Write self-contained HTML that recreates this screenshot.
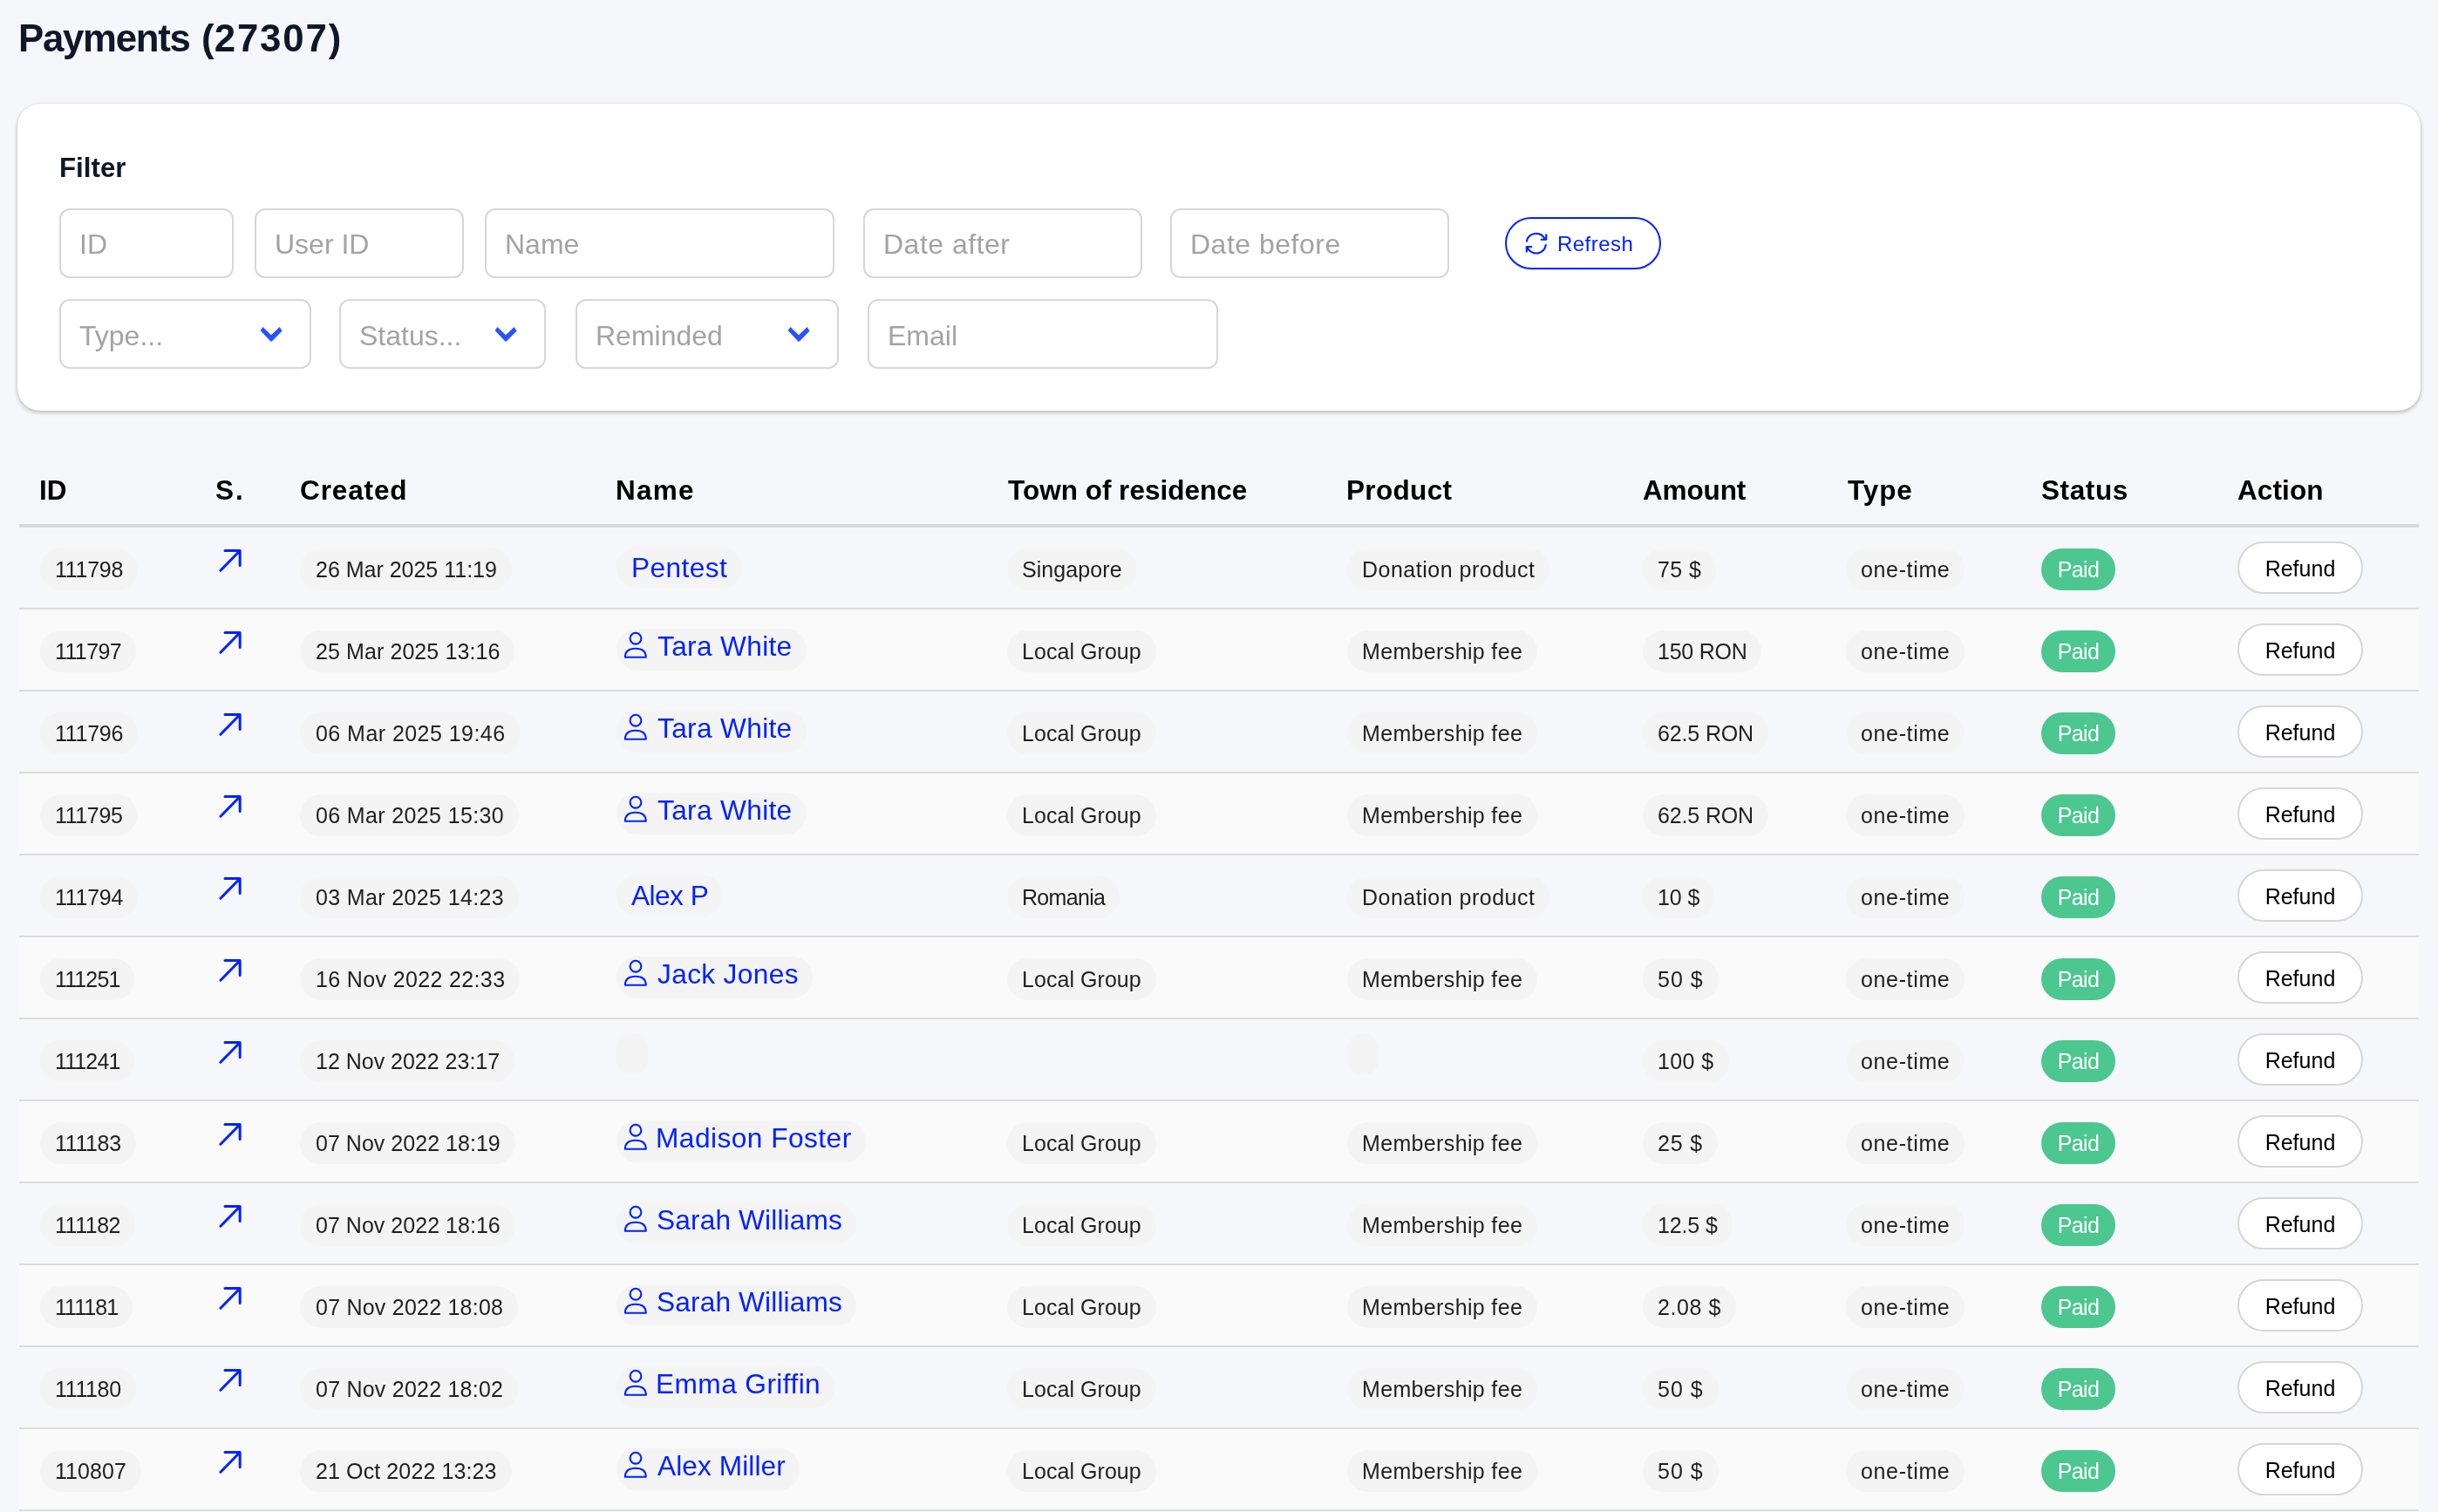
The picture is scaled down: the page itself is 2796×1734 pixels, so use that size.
<!DOCTYPE html><html><head><meta charset="utf-8"><title>Payments</title><style>
*{margin:0;padding:0;box-sizing:border-box}
html,body{width:2796px;height:1734px;overflow:hidden;background:#f6f7fb;font-family:"Liberation Sans",sans-serif}
.a{position:absolute;white-space:nowrap}
.t{position:absolute;white-space:nowrap;line-height:1}
.card{position:absolute;left:20px;top:119px;width:2756px;height:352px;background:#fff;border-radius:26px;box-shadow:0 2px 5px rgba(0,0,0,.26),0 0 2px rgba(0,0,0,.10)}
.in{position:absolute;height:80px;border:2px solid #d7d7d7;border-radius:12px;background:#fff}
.ph{position:absolute;color:#a3a3a3;font-size:32px;line-height:1;white-space:nowrap}
.th{position:absolute;top:547px;font-size:31.5px;font-weight:bold;color:#000;line-height:1;white-space:nowrap}
.row{position:absolute;left:22px;width:2752px;height:94px;border-bottom:2px solid #dcdcdc}
.odd{background:#fafafa}
.pill{position:absolute;height:48px;line-height:48px;background:#f4f4f4;border-radius:24px;padding:0 17px;font-size:25px;color:#1f1f1f;white-space:nowrap}
.name{position:absolute;height:48px;background:#f4f4f4;border-radius:24px;color:#0022ff;font-size:31.7px;white-space:nowrap}
.paid{position:absolute;height:48px;line-height:48px;width:85px;background:#4bc78f;border-radius:24px;color:#fff;font-size:25px;text-align:center;white-space:nowrap}
.ref{position:absolute;height:60px;width:144px;line-height:59px;background:#fff;border:2px solid #d6d6d6;border-radius:30px;color:#000;font-size:25px;text-align:center;white-space:nowrap}
svg{position:absolute;overflow:visible}
#root{position:absolute;left:0;top:0;width:2796px;height:1734px;overflow:hidden;background:#f6f7fb;will-change:transform}
</style></head><body><div id="root">
<div class="t" style="left:21px;top:22px;font-size:43.8px;font-weight:bold;color:#0f172a"><span style="letter-spacing:-1.29px">Payment</span>s (<span style="letter-spacing:1.85px">27307</span>)</div>
<div class="card"></div>
<div class="t" style="left:68px;top:177px;font-size:31.3px;font-weight:bold;color:#0f172a">Filter</div>
<div class="in" style="left:68px;top:239px;width:200px"></div>
<div class="ph" style="left:91px;top:263.8px;">ID</div>
<div class="in" style="left:292px;top:239px;width:240px"></div>
<div class="ph" style="left:315px;top:263.8px;">User ID</div>
<div class="in" style="left:556px;top:239px;width:401px"></div>
<div class="ph" style="left:579px;top:263.8px;">Name</div>
<div class="in" style="left:990px;top:239px;width:320px"></div>
<div class="ph" style="left:1013px;top:263.8px;letter-spacing:0.5px;">Date after</div>
<div class="in" style="left:1342px;top:239px;width:320px"></div>
<div class="ph" style="left:1365px;top:263.8px;letter-spacing:0.5px;">Date before</div>
<div class="a" style="left:1726px;top:249px;width:179px;height:60px;border:2.5px solid #0022ff;border-radius:30px"></div>
<svg style="left:1748px;top:265px" width="28" height="28" viewBox="0 0 28 28" fill="none" stroke="#0022ff" stroke-width="2.4" stroke-linecap="round" stroke-linejoin="round"><g transform="translate(14 14) scale(0.91) translate(-14 -14)"><path d="M1.8 11.3A12.2 12.2 0 0 1 24.3 7.9M26.4 3.4V9.3H20.3M25.9 16.2A12.2 12.2 0 0 1 3 20M1.7 24.5V18.4H7.8"/></g></svg>
<div class="t" style="left:1786px;top:268px;font-size:24px;letter-spacing:0.45px;color:#0022ff">Refresh</div>
<div class="in" style="left:68px;top:343px;width:289px"></div>
<div class="ph" style="left:91px;top:368.5px">Type...</div>
<svg style="left:298px;top:374px" width="26" height="18" viewBox="0 0 26 18"><polygon fill="#2852ff" points="0.6,4.9 3.5,1 13,10.2 22.6,1 25.6,5.4 13.8,17.6 12.4,17.6"/></svg>
<div class="in" style="left:389px;top:343px;width:237px"></div>
<div class="ph" style="left:412px;top:368.5px">Status...</div>
<svg style="left:567px;top:374px" width="26" height="18" viewBox="0 0 26 18"><polygon fill="#2852ff" points="0.6,4.9 3.5,1 13,10.2 22.6,1 25.6,5.4 13.8,17.6 12.4,17.6"/></svg>
<div class="in" style="left:660px;top:343px;width:302px"></div>
<div class="ph" style="left:683px;top:368.5px">Reminded</div>
<svg style="left:903px;top:374px" width="26" height="18" viewBox="0 0 26 18"><polygon fill="#2852ff" points="0.6,4.9 3.5,1 13,10.2 22.6,1 25.6,5.4 13.8,17.6 12.4,17.6"/></svg>
<div class="in" style="left:995px;top:343px;width:402px"></div>
<div class="ph" style="left:1018px;top:368.5px">Email</div>
<div class="th" style="left:45px;letter-spacing:0px">ID</div>
<div class="th" style="left:247px;letter-spacing:1.9px">S.</div>
<div class="th" style="left:344px;letter-spacing:0.88px">Created</div>
<div class="th" style="left:706px;letter-spacing:1.2px">Name</div>
<div class="th" style="left:1156px;letter-spacing:0px">Town of residence</div>
<div class="th" style="left:1544px;letter-spacing:0.33px">Product</div>
<div class="th" style="left:1884px;letter-spacing:-0.15px">Amount</div>
<div class="th" style="left:2119px;letter-spacing:0.9px">Type</div>
<div class="th" style="left:2341px;letter-spacing:0.6px">Status</div>
<div class="th" style="left:2566px;letter-spacing:0.1px">Action</div>
<div class="a" style="left:22px;top:601px;width:2752px;height:4px;background:#d9d9d9"></div>
<div class="row" style="top:605px;height:94px"></div>
<div class="pill" style="left:46px;top:629px;letter-spacing:-0.28px;">111798</div>
<svg style="left:250px;top:624px" width="28" height="28" viewBox="0 0 28 28" fill="none" stroke="#0022ff" stroke-width="3" stroke-linecap="round" stroke-linejoin="round"><path d="M2.9 30.2L25 7.8M8 7.4H25.2V24.4"/></svg>
<div class="pill" style="left:344px;top:629px;padding:0 17px 0 18px;letter-spacing:-0.01px;">26 Mar 2025 11:19</div>
<div class="name" style="left:707px;top:627px;padding:0 17px;line-height:48px;letter-spacing:0.38px;">Pentest</div>
<div class="pill" style="left:1155px;top:629px;letter-spacing:0.07px;">Singapore</div>
<div class="pill" style="left:1545px;top:629px;letter-spacing:0.5px;">Donation product</div>
<div class="pill" style="left:1884px;top:629px;letter-spacing:0.4px;">75 $</div>
<div class="pill" style="left:2117px;top:629px;letter-spacing:0.64px;">one-time</div>
<div class="paid" style="left:2341px;top:629px;letter-spacing:-0.6px;">Paid</div>
<div class="ref" style="left:2566px;top:621px;letter-spacing:0.02px;">Refund</div>
<div class="row odd" style="top:699px;height:94px"></div>
<div class="pill" style="left:46px;top:723px;letter-spacing:-0.62px;">111797</div>
<svg style="left:250px;top:718px" width="28" height="28" viewBox="0 0 28 28" fill="none" stroke="#0022ff" stroke-width="3" stroke-linecap="round" stroke-linejoin="round"><path d="M2.9 30.2L25 7.8M8 7.4H25.2V24.4"/></svg>
<div class="pill" style="left:344px;top:723px;padding:0 17px 0 18px;letter-spacing:0.09px;">25 Mar 2025 13:16</div>
<div class="name" style="left:707px;top:721px;padding:0 16px 0 47px;line-height:48px;height:48px;letter-spacing:0.31px;"><span style="position:relative;top:-4px;">Tara White</span></div>
<svg style="left:714px;top:725px" width="30" height="32" viewBox="0 0 30 32" fill="none" stroke="#0022ff" stroke-width="2.1" stroke-linejoin="round"><circle cx="15" cy="7.2" r="6.4"/><path d="M2.9 28.7C2.9 21.2 7.6 18.8 14.85 18.8S26.8 21.2 26.8 28.7Z"/></svg>
<div class="pill" style="left:1155px;top:723px;letter-spacing:0.05px;">Local Group</div>
<div class="pill" style="left:1545px;top:723px;letter-spacing:0.35px;">Membership fee</div>
<div class="pill" style="left:1884px;top:723px;letter-spacing:-0.25px;">150 RON</div>
<div class="pill" style="left:2117px;top:723px;letter-spacing:0.64px;">one-time</div>
<div class="paid" style="left:2341px;top:723px;letter-spacing:-0.6px;">Paid</div>
<div class="ref" style="left:2566px;top:715px;letter-spacing:0.02px;">Refund</div>
<div class="row" style="top:793px;height:94px"></div>
<div class="pill" style="left:46px;top:817px;letter-spacing:-0.28px;">111796</div>
<svg style="left:250px;top:812px" width="28" height="28" viewBox="0 0 28 28" fill="none" stroke="#0022ff" stroke-width="3" stroke-linecap="round" stroke-linejoin="round"><path d="M2.9 30.2L25 7.8M8 7.4H25.2V24.4"/></svg>
<div class="pill" style="left:344px;top:817px;padding:0 17px 0 18px;letter-spacing:0.45px;">06 Mar 2025 19:46</div>
<div class="name" style="left:707px;top:815px;padding:0 16px 0 47px;line-height:48px;height:48px;letter-spacing:0.31px;"><span style="position:relative;top:-4px;">Tara White</span></div>
<svg style="left:714px;top:819px" width="30" height="32" viewBox="0 0 30 32" fill="none" stroke="#0022ff" stroke-width="2.1" stroke-linejoin="round"><circle cx="15" cy="7.2" r="6.4"/><path d="M2.9 28.7C2.9 21.2 7.6 18.8 14.85 18.8S26.8 21.2 26.8 28.7Z"/></svg>
<div class="pill" style="left:1155px;top:817px;letter-spacing:0.05px;">Local Group</div>
<div class="pill" style="left:1545px;top:817px;letter-spacing:0.35px;">Membership fee</div>
<div class="pill" style="left:1884px;top:817px;letter-spacing:-0.14px;">62.5 RON</div>
<div class="pill" style="left:2117px;top:817px;letter-spacing:0.64px;">one-time</div>
<div class="paid" style="left:2341px;top:817px;letter-spacing:-0.6px;">Paid</div>
<div class="ref" style="left:2566px;top:809px;letter-spacing:0.02px;">Refund</div>
<div class="row odd" style="top:887px;height:94px"></div>
<div class="pill" style="left:46px;top:911px;letter-spacing:-0.38px;">111795</div>
<svg style="left:250px;top:906px" width="28" height="28" viewBox="0 0 28 28" fill="none" stroke="#0022ff" stroke-width="3" stroke-linecap="round" stroke-linejoin="round"><path d="M2.9 30.2L25 7.8M8 7.4H25.2V24.4"/></svg>
<div class="pill" style="left:344px;top:911px;padding:0 17px 0 18px;letter-spacing:0.36px;">06 Mar 2025 15:30</div>
<div class="name" style="left:707px;top:909px;padding:0 16px 0 47px;line-height:48px;height:48px;letter-spacing:0.31px;"><span style="position:relative;top:-4px;">Tara White</span></div>
<svg style="left:714px;top:913px" width="30" height="32" viewBox="0 0 30 32" fill="none" stroke="#0022ff" stroke-width="2.1" stroke-linejoin="round"><circle cx="15" cy="7.2" r="6.4"/><path d="M2.9 28.7C2.9 21.2 7.6 18.8 14.85 18.8S26.8 21.2 26.8 28.7Z"/></svg>
<div class="pill" style="left:1155px;top:911px;letter-spacing:0.05px;">Local Group</div>
<div class="pill" style="left:1545px;top:911px;letter-spacing:0.35px;">Membership fee</div>
<div class="pill" style="left:1884px;top:911px;letter-spacing:-0.14px;">62.5 RON</div>
<div class="pill" style="left:2117px;top:911px;letter-spacing:0.64px;">one-time</div>
<div class="paid" style="left:2341px;top:911px;letter-spacing:-0.6px;">Paid</div>
<div class="ref" style="left:2566px;top:903px;letter-spacing:0.02px;">Refund</div>
<div class="row" style="top:981px;height:94px"></div>
<div class="pill" style="left:46px;top:1005px;letter-spacing:-0.28px;">111794</div>
<svg style="left:250px;top:1000px" width="28" height="28" viewBox="0 0 28 28" fill="none" stroke="#0022ff" stroke-width="3" stroke-linecap="round" stroke-linejoin="round"><path d="M2.9 30.2L25 7.8M8 7.4H25.2V24.4"/></svg>
<div class="pill" style="left:344px;top:1005px;padding:0 17px 0 18px;letter-spacing:0.36px;">03 Mar 2025 14:23</div>
<div class="name" style="left:707px;top:1003px;padding:0 17px;line-height:48px;letter-spacing:-0.56px;">Alex P</div>
<div class="pill" style="left:1155px;top:1005px;letter-spacing:-0.68px;">Romania</div>
<div class="pill" style="left:1545px;top:1005px;letter-spacing:0.5px;">Donation product</div>
<div class="pill" style="left:1884px;top:1005px;letter-spacing:-0.07px;">10 $</div>
<div class="pill" style="left:2117px;top:1005px;letter-spacing:0.64px;">one-time</div>
<div class="paid" style="left:2341px;top:1005px;letter-spacing:-0.6px;">Paid</div>
<div class="ref" style="left:2566px;top:997px;letter-spacing:0.02px;">Refund</div>
<div class="row odd" style="top:1075px;height:94px"></div>
<div class="pill" style="left:46px;top:1099px;letter-spacing:-0.88px;">111251</div>
<svg style="left:250px;top:1094px" width="28" height="28" viewBox="0 0 28 28" fill="none" stroke="#0022ff" stroke-width="3" stroke-linecap="round" stroke-linejoin="round"><path d="M2.9 30.2L25 7.8M8 7.4H25.2V24.4"/></svg>
<div class="pill" style="left:344px;top:1099px;padding:0 17px 0 18px;letter-spacing:0.36px;">16 Nov 2022 22:33</div>
<div class="name" style="left:707px;top:1097px;padding:0 16px 0 47px;line-height:48px;height:48px;letter-spacing:0.33px;"><span style="position:relative;top:-4px;">Jack Jones</span></div>
<svg style="left:714px;top:1101px" width="30" height="32" viewBox="0 0 30 32" fill="none" stroke="#0022ff" stroke-width="2.1" stroke-linejoin="round"><circle cx="15" cy="7.2" r="6.4"/><path d="M2.9 28.7C2.9 21.2 7.6 18.8 14.85 18.8S26.8 21.2 26.8 28.7Z"/></svg>
<div class="pill" style="left:1155px;top:1099px;letter-spacing:0.05px;">Local Group</div>
<div class="pill" style="left:1545px;top:1099px;letter-spacing:0.35px;">Membership fee</div>
<div class="pill" style="left:1884px;top:1099px;letter-spacing:1.0px;">50 $</div>
<div class="pill" style="left:2117px;top:1099px;letter-spacing:0.64px;">one-time</div>
<div class="paid" style="left:2341px;top:1099px;letter-spacing:-0.6px;">Paid</div>
<div class="ref" style="left:2566px;top:1091px;letter-spacing:0.02px;">Refund</div>
<div class="row" style="top:1169px;height:94px"></div>
<div class="pill" style="left:46px;top:1193px;letter-spacing:-0.88px;">111241</div>
<svg style="left:250px;top:1188px" width="28" height="28" viewBox="0 0 28 28" fill="none" stroke="#0022ff" stroke-width="3" stroke-linecap="round" stroke-linejoin="round"><path d="M2.9 30.2L25 7.8M8 7.4H25.2V24.4"/></svg>
<div class="pill" style="left:344px;top:1193px;padding:0 17px 0 18px;letter-spacing:-0.01px;">12 Nov 2022 23:17</div>
<div class="name" style="left:707px;top:1185px;width:36px"></div>
<div class="name" style="left:1545px;top:1185px;width:36px"></div>
<div class="pill" style="left:1884px;top:1193px;letter-spacing:0.4px;">100 $</div>
<div class="pill" style="left:2117px;top:1193px;letter-spacing:0.64px;">one-time</div>
<div class="paid" style="left:2341px;top:1193px;letter-spacing:-0.6px;">Paid</div>
<div class="ref" style="left:2566px;top:1185px;letter-spacing:0.02px;">Refund</div>
<div class="row odd" style="top:1263px;height:94px"></div>
<div class="pill" style="left:46px;top:1287px;letter-spacing:-0.36px;">111183</div>
<svg style="left:250px;top:1282px" width="28" height="28" viewBox="0 0 28 28" fill="none" stroke="#0022ff" stroke-width="3" stroke-linecap="round" stroke-linejoin="round"><path d="M2.9 30.2L25 7.8M8 7.4H25.2V24.4"/></svg>
<div class="pill" style="left:344px;top:1287px;padding:0 17px 0 18px;letter-spacing:0.03px;">07 Nov 2022 18:19</div>
<div class="name" style="left:707px;top:1285px;padding:0 16px 0 47px;line-height:48px;height:48px;letter-spacing:0.45px;"><span style="position:relative;top:-4px;margin-left:-2px">Madison Foster</span></div>
<svg style="left:714px;top:1289px" width="30" height="32" viewBox="0 0 30 32" fill="none" stroke="#0022ff" stroke-width="2.1" stroke-linejoin="round"><circle cx="15" cy="7.2" r="6.4"/><path d="M2.9 28.7C2.9 21.2 7.6 18.8 14.85 18.8S26.8 21.2 26.8 28.7Z"/></svg>
<div class="pill" style="left:1155px;top:1287px;letter-spacing:0.05px;">Local Group</div>
<div class="pill" style="left:1545px;top:1287px;letter-spacing:0.35px;">Membership fee</div>
<div class="pill" style="left:1884px;top:1287px;letter-spacing:0.83px;">25 $</div>
<div class="pill" style="left:2117px;top:1287px;letter-spacing:0.64px;">one-time</div>
<div class="paid" style="left:2341px;top:1287px;letter-spacing:-0.6px;">Paid</div>
<div class="ref" style="left:2566px;top:1279px;letter-spacing:0.02px;">Refund</div>
<div class="row" style="top:1357px;height:94px"></div>
<div class="pill" style="left:46px;top:1381px;letter-spacing:-0.48px;">111182</div>
<svg style="left:250px;top:1376px" width="28" height="28" viewBox="0 0 28 28" fill="none" stroke="#0022ff" stroke-width="3" stroke-linecap="round" stroke-linejoin="round"><path d="M2.9 30.2L25 7.8M8 7.4H25.2V24.4"/></svg>
<div class="pill" style="left:344px;top:1381px;padding:0 17px 0 18px;letter-spacing:0.03px;">07 Nov 2022 18:16</div>
<div class="name" style="left:707px;top:1379px;padding:0 16px 0 47px;line-height:48px;height:48px;letter-spacing:0.12px;"><span style="position:relative;top:-4px;margin-left:-1px">Sarah Williams</span></div>
<svg style="left:714px;top:1383px" width="30" height="32" viewBox="0 0 30 32" fill="none" stroke="#0022ff" stroke-width="2.1" stroke-linejoin="round"><circle cx="15" cy="7.2" r="6.4"/><path d="M2.9 28.7C2.9 21.2 7.6 18.8 14.85 18.8S26.8 21.2 26.8 28.7Z"/></svg>
<div class="pill" style="left:1155px;top:1381px;letter-spacing:0.05px;">Local Group</div>
<div class="pill" style="left:1545px;top:1381px;letter-spacing:0.35px;">Membership fee</div>
<div class="pill" style="left:1884px;top:1381px;letter-spacing:-0.14px;">12.5 $</div>
<div class="pill" style="left:2117px;top:1381px;letter-spacing:0.64px;">one-time</div>
<div class="paid" style="left:2341px;top:1381px;letter-spacing:-0.6px;">Paid</div>
<div class="ref" style="left:2566px;top:1373px;letter-spacing:0.02px;">Refund</div>
<div class="row odd" style="top:1451px;height:94px"></div>
<div class="pill" style="left:46px;top:1475px;letter-spacing:-0.96px;">111181</div>
<svg style="left:250px;top:1470px" width="28" height="28" viewBox="0 0 28 28" fill="none" stroke="#0022ff" stroke-width="3" stroke-linecap="round" stroke-linejoin="round"><path d="M2.9 30.2L25 7.8M8 7.4H25.2V24.4"/></svg>
<div class="pill" style="left:344px;top:1475px;padding:0 17px 0 18px;letter-spacing:0.23px;">07 Nov 2022 18:08</div>
<div class="name" style="left:707px;top:1473px;padding:0 16px 0 47px;line-height:48px;height:48px;letter-spacing:0.12px;"><span style="position:relative;top:-4px;margin-left:-1px">Sarah Williams</span></div>
<svg style="left:714px;top:1477px" width="30" height="32" viewBox="0 0 30 32" fill="none" stroke="#0022ff" stroke-width="2.1" stroke-linejoin="round"><circle cx="15" cy="7.2" r="6.4"/><path d="M2.9 28.7C2.9 21.2 7.6 18.8 14.85 18.8S26.8 21.2 26.8 28.7Z"/></svg>
<div class="pill" style="left:1155px;top:1475px;letter-spacing:0.05px;">Local Group</div>
<div class="pill" style="left:1545px;top:1475px;letter-spacing:0.35px;">Membership fee</div>
<div class="pill" style="left:1884px;top:1475px;letter-spacing:0.56px;">2.08 $</div>
<div class="pill" style="left:2117px;top:1475px;letter-spacing:0.64px;">one-time</div>
<div class="paid" style="left:2341px;top:1475px;letter-spacing:-0.6px;">Paid</div>
<div class="ref" style="left:2566px;top:1467px;letter-spacing:0.02px;">Refund</div>
<div class="row" style="top:1545px;height:94px"></div>
<div class="pill" style="left:46px;top:1569px;letter-spacing:-0.36px;">111180</div>
<svg style="left:250px;top:1564px" width="28" height="28" viewBox="0 0 28 28" fill="none" stroke="#0022ff" stroke-width="3" stroke-linecap="round" stroke-linejoin="round"><path d="M2.9 30.2L25 7.8M8 7.4H25.2V24.4"/></svg>
<div class="pill" style="left:344px;top:1569px;padding:0 17px 0 18px;letter-spacing:0.23px;">07 Nov 2022 18:02</div>
<div class="name" style="left:707px;top:1567px;padding:0 16px 0 47px;line-height:48px;height:48px;letter-spacing:0.4px;"><span style="position:relative;top:-4px;margin-left:-2px">Emma Griffin</span></div>
<svg style="left:714px;top:1571px" width="30" height="32" viewBox="0 0 30 32" fill="none" stroke="#0022ff" stroke-width="2.1" stroke-linejoin="round"><circle cx="15" cy="7.2" r="6.4"/><path d="M2.9 28.7C2.9 21.2 7.6 18.8 14.85 18.8S26.8 21.2 26.8 28.7Z"/></svg>
<div class="pill" style="left:1155px;top:1569px;letter-spacing:0.05px;">Local Group</div>
<div class="pill" style="left:1545px;top:1569px;letter-spacing:0.35px;">Membership fee</div>
<div class="pill" style="left:1884px;top:1569px;letter-spacing:1.0px;">50 $</div>
<div class="pill" style="left:2117px;top:1569px;letter-spacing:0.64px;">one-time</div>
<div class="paid" style="left:2341px;top:1569px;letter-spacing:-0.6px;">Paid</div>
<div class="ref" style="left:2566px;top:1561px;letter-spacing:0.02px;">Refund</div>
<div class="row odd" style="top:1639px;height:94px"></div>
<div class="pill" style="left:46px;top:1663px;letter-spacing:0.06px;">110807</div>
<svg style="left:250px;top:1658px" width="28" height="28" viewBox="0 0 28 28" fill="none" stroke="#0022ff" stroke-width="3" stroke-linecap="round" stroke-linejoin="round"><path d="M2.9 30.2L25 7.8M8 7.4H25.2V24.4"/></svg>
<div class="pill" style="left:344px;top:1663px;padding:0 17px 0 18px;letter-spacing:0.11px;">21 Oct 2022 13:23</div>
<div class="name" style="left:707px;top:1661px;padding:0 16px 0 47px;line-height:48px;height:48px;letter-spacing:0.06px;"><span style="position:relative;top:-4px;">Alex Miller</span></div>
<svg style="left:714px;top:1665px" width="30" height="32" viewBox="0 0 30 32" fill="none" stroke="#0022ff" stroke-width="2.1" stroke-linejoin="round"><circle cx="15" cy="7.2" r="6.4"/><path d="M2.9 28.7C2.9 21.2 7.6 18.8 14.85 18.8S26.8 21.2 26.8 28.7Z"/></svg>
<div class="pill" style="left:1155px;top:1663px;letter-spacing:0.05px;">Local Group</div>
<div class="pill" style="left:1545px;top:1663px;letter-spacing:0.35px;">Membership fee</div>
<div class="pill" style="left:1884px;top:1663px;letter-spacing:1.0px;">50 $</div>
<div class="pill" style="left:2117px;top:1663px;letter-spacing:0.64px;">one-time</div>
<div class="paid" style="left:2341px;top:1663px;letter-spacing:-0.6px;">Paid</div>
<div class="ref" style="left:2566px;top:1655px;letter-spacing:0.02px;">Refund</div>
</div></body></html>
